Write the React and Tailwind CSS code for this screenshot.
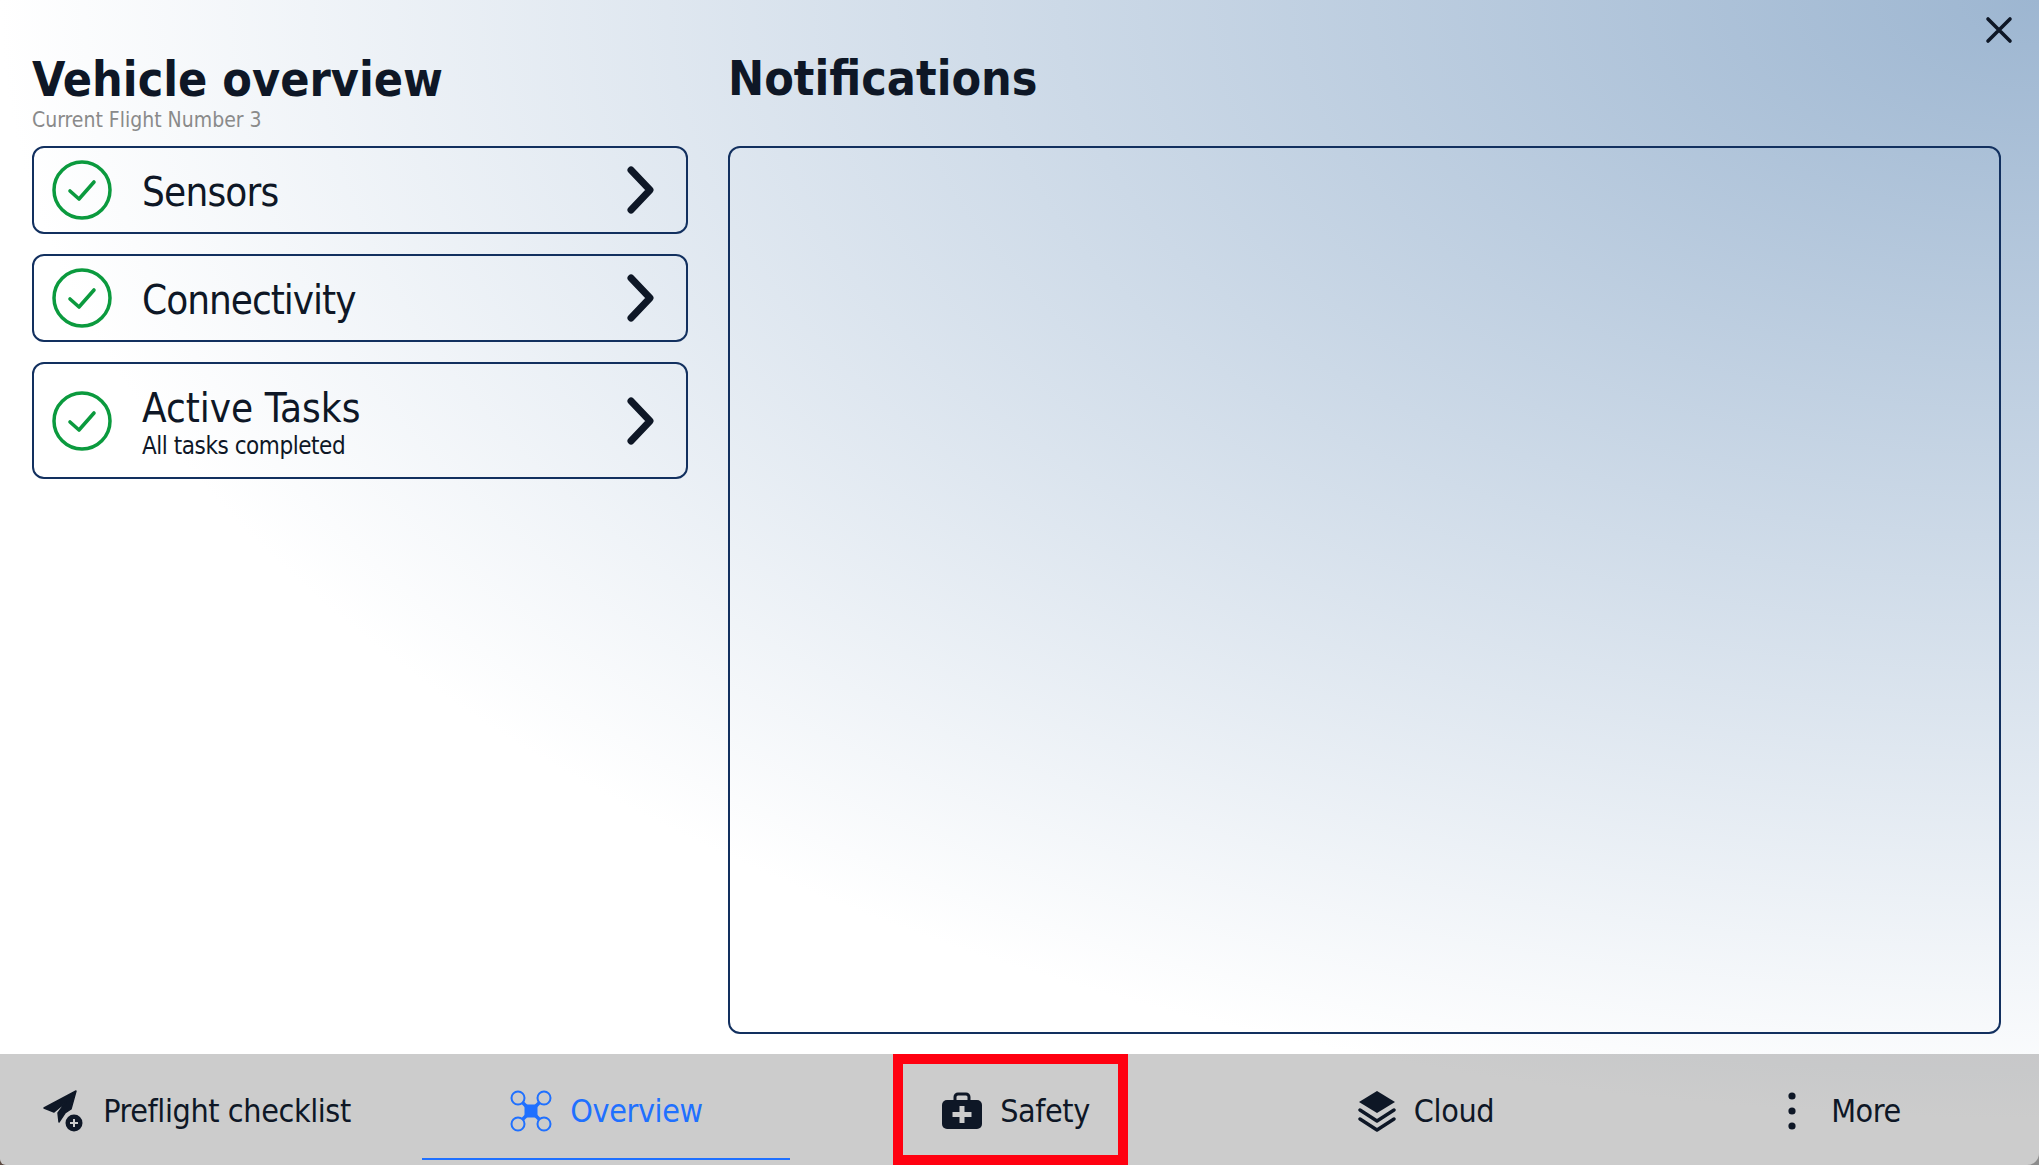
const font = { fontFamily: '"DejaVu Sans", sans-serif' }

const CheckBadge = () => (
  <svg width="60" height="60" viewBox="0 0 60 60" className="shrink-0">
    <circle cx="30" cy="30" r="28" fill="none" stroke="#0b9a3e" strokeWidth="3.5" />
    <path d="M18 31l9 8 15-17" fill="none" stroke="#0b9a3e" strokeWidth="3.6" strokeLinecap="round" strokeLinejoin="round" />
  </svg>
)

const Chevron = () => (
  <svg width="32" height="50" viewBox="0 0 32 50" className="shrink-0">
    <path d="M6 5l19 20-19 20" fill="none" stroke="#0e1726" strokeWidth="7" strokeLinecap="round" strokeLinejoin="round" />
  </svg>
)

const Row = ({ label, sub, tall, tracking }) => (
  <div className={`flex items-center border-2 border-[#12305f] rounded-xl pl-[18px] pr-[29px] ${tall ? 'h-[117px]' : 'h-[88px]'}`}>
    <CheckBadge />
    <div className={`ml-[30px] flex-1 text-[#0e1726] font-stretch-condensed ${tall ? 'pt-[2px]' : 'pt-[4px]'}`}>
      <div className={`text-[40px] leading-[48px] ${tracking}`}>{label}</div>
      {sub && <div className="text-[24px] leading-[28px] tracking-[-0.45px]">{sub}</div>}
    </div>
    <Chevron />
  </div>
)

const PlaneIcon = () => (
  <svg width="44" height="44" viewBox="0 0 44 44">
    <path d="M3 19L35 2 30 20 24 24 18 33 17 24 25 13 13 23Z" fill="#0e1726" stroke="#0e1726" strokeWidth="1.500" strokeLinejoin="round" />
    <circle cx="33" cy="34" r="10.500" fill="#cccccc" />
    <circle cx="33" cy="34" r="8.500" fill="#0e1726" />
    <path d="M33 30v8M29 34h8" stroke="#cccccc" strokeWidth="2" />
  </svg>
)

const DroneIcon = () => (
  <svg width="42" height="42" viewBox="0 0 42 42" fill="none" stroke="#1f70ff" strokeWidth="2">
    <circle cx="8" cy="8" r="6.500" />
    <circle cx="34" cy="8" r="6.500" />
    <circle cx="8" cy="34" r="6.500" />
    <circle cx="34" cy="34" r="6.500" />
    <path d="M12.500 12.500l17 17M29.500 12.500l-17 17" strokeWidth="3.500" />
    <rect x="14.500" y="14.500" width="13" height="13" fill="#1f70ff" stroke="none" />
  </svg>
)

const CaseIcon = () => (
  <svg width="40" height="38" viewBox="0 0 40 38">
    <path d="M13 9V5a3 3 0 013-3h8a3 3 0 013 3v4" fill="none" stroke="#0e1726" strokeWidth="3" />
    <rect x="0" y="8" width="40" height="29" rx="5" fill="#0e1726" />
    <path d="M20 14v17M10.500 22.500h19" stroke="#cccccc" strokeWidth="5" />
  </svg>
)

const LayersIcon = () => (
  <svg width="38" height="42" viewBox="0 0 38 42" fill="none" stroke="#0e1726">
    <path d="M19 1L37 12 19 23 1 12Z" fill="#0e1726" stroke="none" />
    <path d="M2 20l17 11 17-11M2 29l17 11 17-11" strokeWidth="3.400" strokeLinecap="round" strokeLinejoin="round" />
  </svg>
)

const DotsIcon = () => (
  <svg width="10" height="40" viewBox="0 0 10 40" fill="#0e1726" className="mr-[16px]">
    <circle cx="5" cy="5" r="3.600" />
    <circle cx="5" cy="20" r="3.600" />
    <circle cx="5" cy="35" r="3.600" />
  </svg>
)

const tabs = [
  { label: 'Preflight checklist', icon: <PlaneIcon /> },
  { label: 'Overview', icon: <DroneIcon />, active: true },
  { label: 'Safety', icon: <CaseIcon /> },
  { label: 'Cloud', icon: <LayersIcon /> },
  { label: 'More', icon: <DotsIcon /> },
]

export default function App() {
  return (
    <div className="h-[1165px] w-[2039px] overflow-hidden bg-[linear-gradient(to_right,#5c4a42_50%,#8c8c8c_50%)]">
      <div
        style={font}
        className="relative h-full overflow-hidden flex flex-col rounded-bl-[6px] rounded-br-[12px] bg-[radial-gradient(ellipse_100%_96%_at_top_right,#9db6d1,#ffffff)]"
      >
        <svg width="28" height="28" viewBox="0 0 28 28" className="absolute top-[16px] right-[26px]">
          <path d="M3 3l22 22M25 3L3 25" stroke="#0e1726" strokeWidth="3.600" strokeLinecap="round" />
        </svg>

        <div className="flex-1 flex gap-[40px] pl-[32px] pr-[38px] pb-[20px] pt-[50px]">
          <div className="w-[656px] shrink-0 flex flex-col">
            <h1 className="text-[48px] leading-[59px] font-bold text-[#0e1726] font-stretch-condensed">Vehicle overview</h1>
            <div className="text-[21px] leading-[23px] text-[#8a8a8a] font-stretch-condensed">Current Flight Number 3</div>
            <div className="flex flex-col gap-[20px] mt-[14px]">
              <Row label="Sensors" tracking="tracking-[-0.8px]" />
              <Row label="Connectivity" tracking="tracking-[-1px]" />
              <Row label="Active Tasks" sub="All tasks completed" tall tracking="tracking-normal" />
            </div>
          </div>
          <div className="flex-1 flex flex-col">
            <h1 className="text-[48px] leading-[57px] font-bold text-[#0e1726] font-stretch-condensed">Notifications</h1>
            <div className="flex-1 mt-[39px] border-2 border-[#12305f] rounded-xl" />
          </div>
        </div>

        <div className="relative h-[111px] bg-black/20 grid grid-cols-[392px_429px_390px_430px_406px] text-[32px] tracking-[-0.4px] font-stretch-condensed text-[#0e1726]">
          {tabs.map((t) => (
            <div key={t.label} className="relative flex items-center justify-center gap-[18px] pt-[2px]">
              {t.icon}
              <span className={t.active ? 'text-[#1f70ff]' : ''}>{t.label}</span>
              {t.active && <div className="absolute left-[30px] right-[31px] bottom-[5px] h-[2px] bg-[#1f70ff]" />}
            </div>
          ))}
          <div className="absolute left-[893px] top-0 w-[235px] h-[111px] border-[10px] border-[#ff0010]" />
        </div>
      </div>
    </div>
  )
}
